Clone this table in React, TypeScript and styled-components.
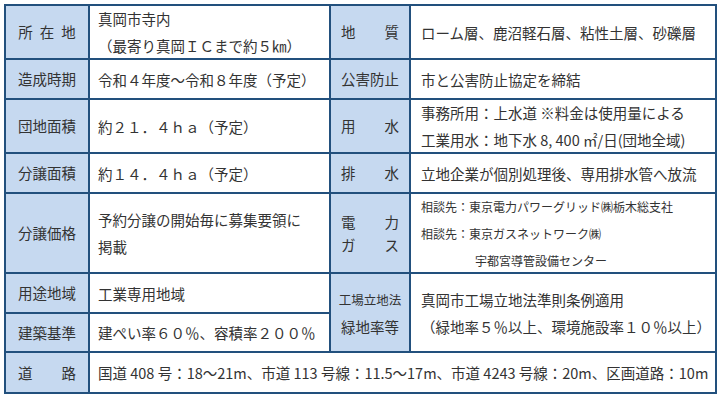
import { createGlobalStyle } from "styled-components";
import styled from "styled-components";

const GlobalStyle = createGlobalStyle`
  html, body {
    margin: 0;
    padding: 0;
    background: #ffffff;
  }
  body {
    font-family: "Noto Sans CJK JP", "Noto Sans", sans-serif;
    color: #333333;
  }
`;

const Page = styled.div`
  padding: 4px;
`;

// the grid background shows through the gaps as the cell borders
const Table = styled.div`
  display: grid;
  width: 713px;
  box-sizing: border-box;
  grid-template-columns: 82px 239px 78px 304px;
  grid-template-rows: 52px 38px 52px 38px 78px 38px 37px 39px;
  gap: 2px;
  padding: 2px;
  background: #22507d;
`;

const Label = styled.div<{ $size?: number; $track?: number; $lh?: number; $rows?: number }>`
  display: flex;
  flex-direction: column;
  align-items: center;
  justify-content: center;
  background: #c6d9f0;
  font-size: ${(p) => p.$size ?? 14.5}px;
  line-height: ${(p) => p.$lh ?? 20}px;
  letter-spacing: ${(p) => p.$track ?? 0}px;
  padding-left: ${(p) => p.$track ?? 0}px;
  white-space: nowrap;
  grid-row: span ${(p) => p.$rows ?? 1};
`;

const Line = styled.span<{ $size?: number }>`
  font-size: ${(p) => (p.$size ? `${p.$size}px` : "inherit")};
`;

const Value = styled.div<{ $size?: number; $lh?: number; $rows?: number; $cols?: number; $pad?: number }>`
  display: flex;
  flex-direction: column;
  justify-content: center;
  background: #ffffff;
  padding-left: ${(p) => p.$pad ?? 8}px;
  font-size: ${(p) => p.$size ?? 14.5}px;
  line-height: ${(p) => p.$lh ?? 27}px;
  white-space: nowrap;
  overflow: visible;
  grid-row: span ${(p) => p.$rows ?? 1};
  grid-column: span ${(p) => p.$cols ?? 1};
`;

const Indent = styled.span`
  padding-left: 54px;
`;

export default function App() {
  return (
    <Page>
      <GlobalStyle />
      <Table>
        <Label $track={7}>所在地</Label>
        <Value>
          <span>真岡市寺内</span>
          <span>（最寄り真岡ＩＣまで約５㎞）</span>
        </Value>
        <Label>地　　質</Label>
        <Value $pad={10}>ローム層、鹿沼軽石層、粘性土層、砂礫層</Value>

        <Label>造成時期</Label>
        <Value>令和４年度～令和８年度（予定）</Value>
        <Label>公害防止</Label>
        <Value $pad={10}>市と公害防止協定を締結</Value>

        <Label>団地面積</Label>
        <Value>約２１．４ｈａ（予定）</Value>
        <Label>用　　水</Label>
        <Value $pad={10}>
          <span>事務所用：上水道 ※料金は使用量による</span>
          <span>工業用水：地下水 8, 400 ㎡/日(団地全域)</span>
        </Value>

        <Label>分譲面積</Label>
        <Value>約１４．４ｈａ（予定）</Value>
        <Label>排　　水</Label>
        <Value $pad={10}>立地企業が個別処理後、専用排水管へ放流</Value>

        <Label>分譲価格</Label>
        <Value>
          <span>予約分譲の開始毎に募集要領に</span>
          <span>掲載</span>
        </Value>
        <Label $lh={23}>
          <Line>電　　力</Line>
          <Line>ガ　　ス</Line>
        </Label>
        <Value $pad={10} $size={12}>
          <span>相談先：東京電力パワーグリッド㈱栃木総支社</span>
          <span>相談先：東京ガスネットワーク㈱</span>
          <Indent>宇都宮導管設備センター</Indent>
        </Value>

        <Label>用途地域</Label>
        <Value>工業専用地域</Value>
        <Label $rows={2} $lh={27}>
          <Line $size={12.5}>工場立地法</Line>
          <Line>緑地率等</Line>
        </Label>
        <Value $pad={10} $rows={2}>
          <span>真岡市工場立地法準則条例適用</span>
          <span>（緑地率５％以上、環境施設率１０％以上）</span>
        </Value>

        <Label>建築基準</Label>
        <Value>建ぺい率６０％、容積率２００％</Value>

        <Label>道　　路</Label>
        <Value $cols={3}>
          国道 408 号：18～21m、市道 113 号線：11.5～17m、市道 4243 号線：20m、区画道路：10m
        </Value>
      </Table>
    </Page>
  );
}
